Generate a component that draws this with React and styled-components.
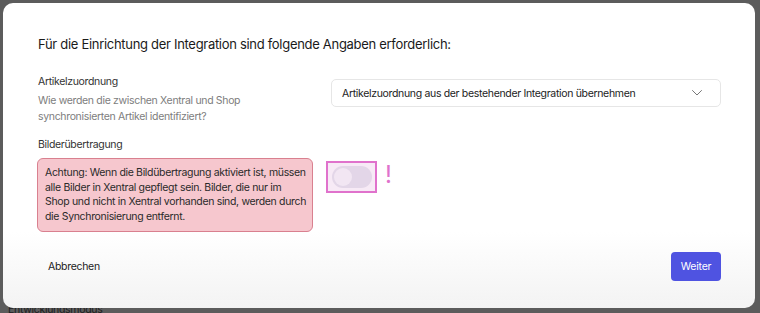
import React, { useState } from 'react'
import styled, { createGlobalStyle } from 'styled-components'

const GlobalStyle = createGlobalStyle`
  html, body {
    margin: 0;
    padding: 0;
    background: #5c5c5c;
    font-family: Inter, "Noto Sans", "Liberation Sans", sans-serif;
    overflow: hidden;
  }
`

const Page = styled.div`
  position: relative;
  width: 760px;
  height: 313px;
  overflow: hidden;
`

const Behind = styled.div`
  position: absolute;
  left: 8px;
  top: 303px;
  font-size: 10.5px;
  letter-spacing: -0.3px;
  color: #1d1d1d;
`

const Modal = styled.div`
  position: relative;
  box-sizing: border-box;
  margin: 3px 0 0 3px;
  width: 752px;
  height: 305px;
  border-radius: 10px;
  background: linear-gradient(#ffffff 75%, #f3f3f3 100%);
  padding: 31px 34px 0 35px;
  color: #1f1f1f;
  letter-spacing: -0.33px;
`

const Title = styled.h2`
  margin: 0;
  font-size: 13px;
  font-weight: 400;
  line-height: 20px;
  letter-spacing: -0.3px;
  color: #1a1a1a;
`

const Row = styled.div`
  display: grid;
  grid-template-columns: 277px 1fr;
  column-gap: 16px;
  margin-top: ${p => p.$top}px;
`

const Field = styled.div`
  display: flex;
  flex-direction: column;
`

const Label = styled.div`
  font-size: 10.5px;
  line-height: 15px;
  color: #333;
`

const Hint = styled.div`
  margin-top: 4px;
  font-size: 10.5px;
  line-height: 16px;
  color: #7d7d7d;
`

const Select = styled.div`
  box-sizing: border-box;
  height: 28px;
  margin-top: 5px;
  border: 1px solid #e6e6e6;
  border-radius: 5px;
  display: flex;
  align-items: center;
  justify-content: space-between;
  padding: 0 17px 0 10px;
  font-size: 10.5px;
  color: #222;
`

const Warning = styled.div`
  box-sizing: border-box;
  margin-top: 6px;
  width: 276px;
  margin-left: -1px;
  padding: 7px 6px 7px 7px;
  background: #f6c7ce;
  border: 1px solid #d9808f;
  border-radius: 6px;
  font-size: 10.5px;
  line-height: 14.5px;
  white-space: nowrap;
  color: #2a2a2a;
`

const ToggleArea = styled.div`
  display: flex;
  align-items: flex-start;
  gap: 8px;
  padding-top: 24px;
  margin-left: -5px;
`

const Highlight = styled.div`
  box-sizing: border-box;
  width: 51px;
  height: 32px;
  border: 2px solid #e072cc;
  background: #f7eaf6;
  display: flex;
  align-items: center;
  justify-content: center;
`

const Track = styled.button`
  box-sizing: border-box;
  width: 40px;
  height: 22px;
  border: none;
  border-radius: 11px;
  background: ${p => (p.$on ? '#4f52e0' : '#e3d6e8')};
  padding: 2px;
  display: flex;
  justify-content: ${p => (p.$on ? 'flex-end' : 'flex-start')};
  cursor: pointer;
`

const Knob = styled.span`
  width: 18px;
  height: 18px;
  border-radius: 50%;
  background: #f2e6f3;
`

const Bang = styled.span`
  font-size: 24px;
  line-height: 28px;
  color: #e072cc;
  font-weight: 400;
`

const Footer = styled.div`
  position: absolute;
  left: 45px;
  right: 34px;
  bottom: 27px;
  display: flex;
  align-items: center;
  justify-content: space-between;
`

const TextButton = styled.button`
  border: none;
  background: none;
  padding: 0;
  font: inherit;
  font-size: 10.5px;
  letter-spacing: -0.3px;
  color: #222;
  cursor: pointer;
`

const Primary = styled.button`
  box-sizing: border-box;
  width: 50px;
  height: 29px;
  border: none;
  border-radius: 4px;
  background: #4f53e1;
  color: #fff;
  font: inherit;
  font-size: 10.5px;
  letter-spacing: -0.2px;
  cursor: pointer;
`

const Chevron = () => (
  <svg width="12" height="8" viewBox="0 0 12 8" fill="none">
    <path d="M1.5 1.5l4.5 4.5 4.5-4.5" stroke="#777" strokeWidth="1" strokeLinecap="round" strokeLinejoin="round" />
  </svg>
)

export default function App() {
  const [on, setOn] = useState(false)
  return (
    <Page>
      <GlobalStyle />
      <Behind>Entwicklungsmodus</Behind>
      <Modal>
        <Title>Für die Einrichtung der Integration sind folgende Angaben erforderlich:</Title>
        <Row $top={20}>
          <Field>
            <Label>Artikelzuordnung</Label>
            <Hint>
              Wie werden die zwischen Xentral und Shop
              <br />
              synchronisierten Artikel identifiziert?
            </Hint>
          </Field>
          <Select>
            <span>Artikelzuordnung aus der bestehender Integration übernehmen</span>
            <Chevron />
          </Select>
        </Row>
        <Row $top={12}>
          <Field>
            <Label>Bilderübertragung</Label>
            <Warning>
              Achtung: Wenn die Bildübertragung aktiviert ist, müssen
              <br />
              alle Bilder in Xentral gepflegt sein. Bilder, die nur im
              <br />
              Shop und nicht in Xentral vorhanden sind, werden durch
              <br />
              die Synchronisierung entfernt.
            </Warning>
          </Field>
          <ToggleArea>
            <Highlight>
              <Track $on={on} onClick={() => setOn(v => !v)} aria-label="Bilderübertragung">
                <Knob />
              </Track>
            </Highlight>
            <Bang>!</Bang>
          </ToggleArea>
        </Row>
        <Footer>
          <TextButton>Abbrechen</TextButton>
          <Primary>Weiter</Primary>
        </Footer>
      </Modal>
    </Page>
  )
}
